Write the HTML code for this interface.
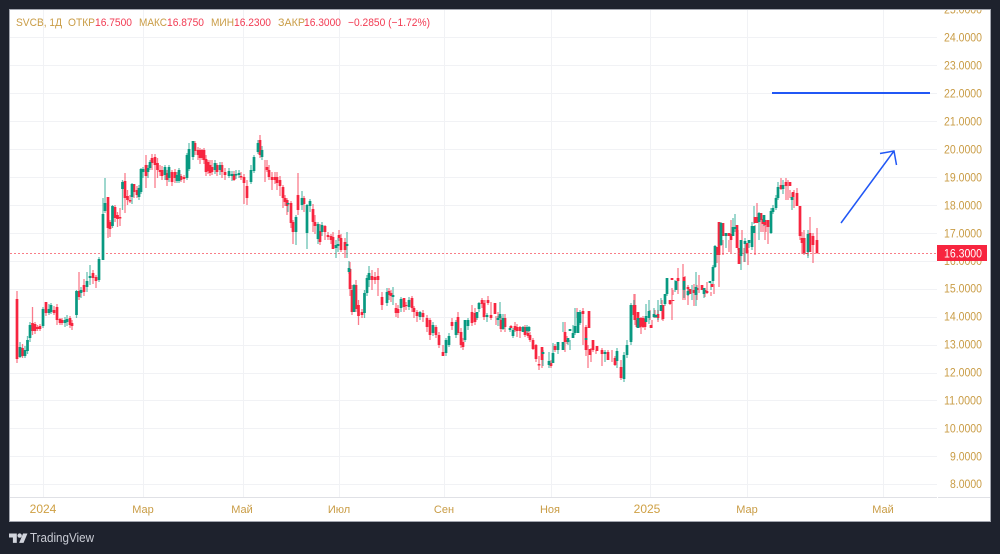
<!DOCTYPE html>
<html lang="ru"><head><meta charset="utf-8"><title>SVCB</title>
<style>
html,body{margin:0;padding:0;width:1000px;height:554px;background:#1e222d;overflow:hidden}
svg{position:absolute;left:0;top:0}
text{font-family:"Liberation Sans",sans-serif}
.cs{filter:blur(.3px)}
</style></head><body>
<svg width="1000" height="554" viewBox="0 0 1000 554" xmlns="http://www.w3.org/2000/svg">
<defs><clipPath id="c"><rect x="10" y="10" width="980" height="511"/></clipPath></defs>
<rect x="9.5" y="9.5" width="981" height="512" fill="#fff" stroke="#a3a6af" stroke-width="1"/>
<g clip-path="url(#c)">
<path d="M10 37.5H937M10 65.5H937M10 93.5H937M10 121.5H937M10 149.5H937M10 177.5H937M10 205.5H937M10 233.5H937M10 261.5H937M10 289.5H937M10 317.5H937M10 345.5H937M10 373.5H937M10 400.5H937M10 428.5H937M10 456.5H937M10 484.5H937" stroke="#f1f2f5" stroke-width="1" fill="none"/>
<path d="M43.5 10V497M143.5 10V497M243.5 10V497M339.5 10V497M444.5 10V497M551.5 10V497M650.5 10V497M747.5 10V497M883.5 10V497" stroke="#f1f2f5" stroke-width="1" fill="none"/>
<path d="M10 497.5H937M938 497.5H990" stroke="#e0e1e6" stroke-width="1" fill="none"/>
<path d="M10 253.5H937" stroke="#f7525f" stroke-width="1" stroke-dasharray="2 2" fill="none" opacity=".75"/>

<g class="cs">
<!-- red wicks -->
<path fill="none" stroke="#f7253f" stroke-width="1.3" opacity=".6" d="M17 291V363M22.5 344V358M32.5 307V335M35 322V334M37.5 325V331M40 324V331M46 302V316M54 306V315M57 304V325M60 318V325M62 318V325M70 316V328M72 320V330M79 272V300M84 279V296M93 270V284M96 275V288M108 197V238M110 220V237M115 205V222M117.5 212V227M120 208V226M125 173V213M127.5 190V205M130 195V203M134 184V198M137 186V198M146 155V188M152 154V170M155 154V188M157.5 158V178M160 165V176M162 166V180M167 170V186M172 170V186M175 169V183M181 174V182M184 175V183M195 141V155M198 147V160M200 148V164M202 149V160M204 148V164M206 155V176M208 160V174M210 160V176M212 160V175M217 163V176M222 162V178M225 168V180M234 171V181M241 172V180M244 174V204M247 180V205M260 135V158M265 160V182M267 160V172M269 165V180M272 172V190M275 172V184M277 172V190M280 176V196M283 185V208M285 195V206M287 198V215M291 201V228M293 220V244M298 173V215M304 196V212M313 204V232M315 215V234M320 224V245M325 225V240M328 232V240M331 234V244M333 232V249M339 230V241M341 234V252M345 238V258M350 262V296M352 285V315M356 280V312M358.5 300V325M362 309V318M372 270V290M375 272V284M378 268V296M382 292V310M389 288V300M391 290V302M396 303V317M398 305V318M404 298V312M406 302V310M412 296V312M414 306V318M417 310V322M423 310V322M427 315V332M430 318V340M436 325V338M439 332V348M443 345V356M452 318V330M458 312V335M461 328V348M463 338V350M472 305V326M475 308V325M482 298V308M484 300V320M488 296V305M485 300V314M491 302V320M498 312V320M496 316V325M501 316V332M505 314V332M511 325V328M515 322V332M517 324V337M520 326V338M525 325V337M528 330V338M530 332V342M533 338V350M536 344V362M539 356V370M542 348V368M551 360V368M555 344V352M565 322V352M567 336V344M577 308V318M583 308V345M586 325V356M588 345V368M591 348V362M593 345V352M596 350V354M602 348V366M608 350V358M612 350V362M615 356V366M621 360V380M635 294V325M637 318V328M640 318V328M643 316V328M650 310V320M655 310V318M662 300V320M634 294V320M638 312V328M641 317V334M645 318V330M652 320V328M658 310V322M663 305V321M670 300V305M672 288V320M678 268V294M673 290V295M683 264V300M685 276V300M688 285V305M694 284V306M697 285V300M699 275V293M705 288V297M707 282V294M711 292V296M714 284V294M717 248V263M719 247V287M723 240V255M729 240V252M731 220V253M738 230V250M742 230V254M744 248V262M748 250V265M755 225V255M757 203V218M761 215V232M763 219V232M765 220V240M766 220V232M768 220V244M781 178V190M786 178V200M788 180V200M790 190V198M794 190V208M797 188V206M800 206V240M802 232V254M804 230V255M808 236V256M810 217V252M813 233V263M817 228V254"/>
<!-- green wicks -->
<path fill="none" stroke="#089981" stroke-width="1.3" opacity=".6" d="M20 342V358M25 346V358M27.5 336V354M30 322V342M43 307V328M49 304V315M51 303V314M65 317V327M67 315V326M76.5 290V318M81 287V298M87 272V292M90 265V285M99 257V282M103 198V260M105 178V213M112.5 205V228M122.5 180V210M132 183V204M139 185V200M141 168V194M143 167V178M148 165V178M150 160V170M165 165V180M169 165V182M177 172V183M179 168V183M187 153V180M189 143V171M193 141V160M215 160V174M220 162V175M229 168V178M232 171V181M236 170V179M239 170V178M251 165V184M254 155V173M258 140V154M262 146V160M288 200V212M296 215V245M302 191V210M307 204V249M310 199V212M318 222V244M322 222V236M336 240V258M338 238V252M347 232V258M349 261V274M354 284V312M364.5 290V318M367 275V296M369 266V287M387 288V306M393 287V305M401 297V312M409 297V310M420 311V320M433 322V336M446 338V356M449 333V347M456 320V338M465 320V342M468 318V330M477 312V320M479 302V312M487 313V322M500 302V326M487 314V322M498 316V326M503 314V330M510 326V332M513 328V338M523 326V332M527 325V334M529 326V332M543 350V366M549 352V368M553 343V359M558 342V354M563 322V332M568 340V345M570 340V350M573 325V335M575 308V335M580 310V325M586 330V345M605 350V362M617 348V368M624 352V382M627 340V358M631 305V345M634 300V305M646 304V320M649 300V320M654 308V318M658 300V320M631 303V340M638 316V328M646 318V322M649 308V324M656 315V318M661 298V304M665 294V306M667 278V296M675 280V292M684 280V298M688 288V296M692 285V300M696 272V306M704 288V298M711 283V290M713 265V284M715 245V268M721 222V246M726 234V248M733 218V236M735 214V232M741 240V270M745 238V262M749 240V248M752 222V250M754 206V224M759 212V240M764 216V226M771 208V234M773 205V214M776 195V210M778 182V200M783 180V194M792 193V210M805 238V254M808 230V258"/>
<!-- red bodies -->
<path fill="none" stroke="#f7253f" stroke-width="2.7" d="M17 299V359M22.5 348V356M32.5 323V331M35 324V331M37.5 327V329M40 326V329M46 302V313M54 310V313M57 307V320M60 319V323M62 320V323M70 318V325M72 323V326M79 291V297M84 285V292M93 273V278M96 277V281M108 197V228M110 222V229M115 207V218M117.5 215V219M120 217V218.5M125 181V198M127.5 196V200M130 200V201.5M134 184V192M137 190V195M146 165V176M152 158V163M155 157V165M157.5 163V170M160 170V172M162 170V176M167 173V180M172 172V182M175 172V178M181 176V180M184 177V179M195 143V151M198 150V155M200 150V158M202 150V158M204 150V160M206 159V172M208 162V171M210 165V173M212 167V172M217 165V172M222 165V172M225 172V175M234 174V180M241 176V177.5M244 177V183M247 186V198M260 140V155M267 167V170M269 170V177M272 177V180M275 177V180M277 177V183M280 180V186M283 187V198M285 198V202M287 200V206M291 203V223M293 222V232M298 195V210M304 198V204M313 209V222M315 222V226M320 231V242M325 226V232M328 235V237M331 236V240M333 237V249M339 235V238M341 238V250M345 242V250M350 269V289M352 290V312M356 285V309M358.5 305V316M362 312V315M372 276V280M375 277V280M378 276V280M382 297V305M389 291V295M391 293V296M396 308V313M398 309V313M404 298V307M406 305V306M412 298V308M414 308V312M417 312V316M423 313V317M427 318V327M430 320V335M436 327V335M439 335V345M443 352V356M452 322V326M458 317V333M461 332V345M463 342V347M472 312V323M475 313V322M482 300V304M484 303V317M488 300V303M495 303V314M491 315V318M501 320V329M505 318V327M511 326V328M515 326V330M517 327V331M520 327V331M525 327V335M528 333V336M530 335V340M533 340V349M536 345V359M539 364V365.5M542 347V360M551 363V366M555 346V350M565 332V342M567 340V342M583 311V314M586 335V337M589 311V328M586 327V350M590 349V355M593 340V350M597 346V351M602 350V354M608 352V360M615 358V365M621 367V378M635 305V320M637 320V327M640 318V327M643 318V327"/>
<path fill="none" stroke="#f7253f" stroke-width="2.7" d="M634 305V315M638 312V322M641 318V326M645 319V327M651 325V328M658 314V318M663 305V319M670 300V304M672 278V280M673 300V301M678 278V281M684 277V289M688 287V289M690 289V294M694 290V293M697 288V290M702 285V290M705 290V292M707 291V293M712 284V287M717 247V255M719 222V255M723 223V236M729 233V236M731 234V240M737 225V248M739 248V264M747 243V253M755 217V223M757 217V223M761 213V220M763 219V224M765 220V225M768 220V227M781 185V189M786 182V186M790 182V186M793 192V197M797 193V206M800 206V236M802 238V243M804 238V253M807 253V254M810 233V252M813 236V245M817 240V253"/>
<!-- green bodies -->
<path fill="none" stroke="#089981" stroke-width="2.7" d="M20 347V357M25 350V356M27.5 340V351M30 325V338M43 309V326M49 309V313M51 305V312M65 320V323M67 319V322M76.5 291V315M81 290V293M87 281V287M90 276V278M99 259V280M103 214V260M105 203V211M112.5 206V226M122.5 182V189M132 184V197M139 188V197M141 169V192M143 169V172M148 168V172M150 162V168M165 167V175M169 167V178M177 175V181M179 170V181M187 155V178M189 149V169M193 141V157M215 163V170M220 165V170M229 171V176M232 174V176M236 174V175.5M239 173V175M251 170V182M254 157V171M258 143V152M262 150V157M288 203V204.5M296 217V232M302 198V205M307 205V233M310 201V206M318 224V239M322 225V232M336 245V248M338 244V246M347 244V246M349 268V272M354 285V312M364.5 293V313M367 278V293M369 273V280M387 292V303M393 295V297M401 299V308M409 300V307M420 312V317M433 325V333M446 340V353M449 336V345M456 322V335M465 320V340M468 320V326M477 312V318M479 303V309M487 315V317M500 314V318M498 318V320M503 318V329M510 328V330M513 330V336M523 327V332M527 327V331M529 327V331M543 352V354M549 361V365M553 353V363M558 342V350M563 342V350M568 338V342M570 329V331M573 333V338M575 326V333M578 312V333M580 312V323M586 338V340M605 352V354M617 351V361M624 355V379M627 345V355M631 305V342"/>
<path fill="none" stroke="#089981" stroke-width="2.7" d="M631 305V340M638 318V328M646 316V322M649 311V318M654 314V317M656 315V317M661 305V311M665 294V304M667 278V294M676 281V290M684 281V290M688 291V295M696 287V295M704 288V294M710 281V283M713 267V281M715 246V267M721 223V245M726 233V236M733 227V236M735 227V229M741 240V256M745 241V244M749 240V243M752 226V247M754 226V233M759 213V222M764 215V222M771 211V233M773 208V212M776 198V208M778 187V198M783 185V189M792 197V200M808 234V252"/>
</g>

<!-- drawings -->
<path d="M772 93H930" stroke="#2157f5" stroke-width="2" fill="none"/>
<path d="M841 223L894 151M880 153.5L894 151L896.5 165" stroke="#2157f5" stroke-width="1.5" fill="none"/>

<!-- price axis -->
<g font-size="11.5" fill="#c99c45">
<text x="944" y="13.5" textLength="38" lengthAdjust="spacingAndGlyphs">25.0000</text>
<text x="944" y="41.5" textLength="38" lengthAdjust="spacingAndGlyphs">24.0000</text>
<text x="944" y="69.5" textLength="38" lengthAdjust="spacingAndGlyphs">23.0000</text>
<text x="944" y="97.5" textLength="38" lengthAdjust="spacingAndGlyphs">22.0000</text>
<text x="944" y="125.5" textLength="38" lengthAdjust="spacingAndGlyphs">21.0000</text>
<text x="944" y="153.5" textLength="38" lengthAdjust="spacingAndGlyphs">20.0000</text>
<text x="944" y="181.5" textLength="38" lengthAdjust="spacingAndGlyphs">19.0000</text>
<text x="944" y="209.5" textLength="38" lengthAdjust="spacingAndGlyphs">18.0000</text>
<text x="944" y="237.5" textLength="38" lengthAdjust="spacingAndGlyphs">17.0000</text>
<text x="944" y="265" textLength="38" lengthAdjust="spacingAndGlyphs">16.0000</text>
<text x="944" y="292.5" textLength="38" lengthAdjust="spacingAndGlyphs">15.0000</text>
<text x="944" y="320.5" textLength="38" lengthAdjust="spacingAndGlyphs">14.0000</text>
<text x="944" y="348.5" textLength="38" lengthAdjust="spacingAndGlyphs">13.0000</text>
<text x="944" y="376.5" textLength="38" lengthAdjust="spacingAndGlyphs">12.0000</text>
<text x="944" y="404.5" textLength="38" lengthAdjust="spacingAndGlyphs">11.0000</text>
<text x="944" y="432.5" textLength="38" lengthAdjust="spacingAndGlyphs">10.0000</text>
<text x="950" y="460.5" textLength="32" lengthAdjust="spacingAndGlyphs">9.0000</text>
<text x="950" y="488" textLength="32" lengthAdjust="spacingAndGlyphs">8.0000</text>
</g>
<rect x="937" y="245" width="50" height="16" fill="#f7253f"/>
<text x="944" y="257.5" font-size="11.5" fill="#fff" textLength="38" lengthAdjust="spacingAndGlyphs">16.3000</text>

<!-- time axis -->
<g font-size="11" fill="#c99c45" text-anchor="middle">
<text x="43" y="513" font-size="12" fill="#cfa044">2024</text>
<text x="143" y="513">Мар</text>
<text x="242" y="513">Май</text>
<text x="339" y="513">Июл</text>
<text x="444" y="513">Сен</text>
<text x="550" y="513">Ноя</text>
<text x="647" y="513" font-size="12" fill="#cfa044">2025</text>
<text x="747" y="513">Мар</text>
<text x="883" y="513">Май</text>
</g>

<!-- legend -->
<g font-size="11">
<text x="16" y="26" fill="#c99c45" textLength="46" lengthAdjust="spacingAndGlyphs">SVCB, 1Д</text>
<text x="68" y="26" fill="#c99c45" textLength="27" lengthAdjust="spacingAndGlyphs">ОТКР</text>
<text x="95" y="26" fill="#f23a52" textLength="37" lengthAdjust="spacingAndGlyphs">16.7500</text>
<text x="139" y="26" fill="#c99c45" textLength="28" lengthAdjust="spacingAndGlyphs">МАКС</text>
<text x="167" y="26" fill="#f23a52" textLength="37" lengthAdjust="spacingAndGlyphs">16.8750</text>
<text x="211" y="26" fill="#c99c45" textLength="23" lengthAdjust="spacingAndGlyphs">МИН</text>
<text x="234" y="26" fill="#f23a52" textLength="37" lengthAdjust="spacingAndGlyphs">16.2300</text>
<text x="278" y="26" fill="#c99c45" textLength="27" lengthAdjust="spacingAndGlyphs">ЗАКР</text>
<text x="304" y="26" fill="#f23a52" textLength="37" lengthAdjust="spacingAndGlyphs">16.3000</text>
<text x="348" y="26" fill="#f23a52" textLength="82" lengthAdjust="spacingAndGlyphs">−0.2850 (−1.72%)</text>
</g>
</g>

<!-- logo -->
<g fill="#d1d4dc" transform="translate(9 532.5) scale(.52)">
<path d="M15 20H7.5V9.5H0V2h15v18zM28 20h-8.5L27 2h8.5L28 20z"/><circle cx="20.5" cy="6" r="4.2"/>
</g>
<text x="30" y="542" font-size="12.5" fill="#c9ccd4" textLength="64" lengthAdjust="spacingAndGlyphs">TradingView</text>
</svg>
</body></html>
